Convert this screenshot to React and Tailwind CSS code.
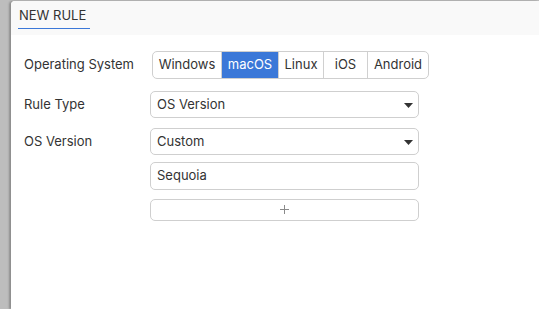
export default function App() {
  const font = { fontFamily: 'Inter, "Noto Sans", sans-serif' };
  const segs = [
    { t: "Windows", w: "w-[68px]" },
    { t: "macOS", w: "w-[57px]", active: true },
    { t: "Linux", w: "w-[45px]" },
    { t: "iOS", w: "w-[44px]" },
    { t: "Android", w: "w-[61px]" },
  ];
  const Caret = () => (
    <svg width="9" height="5" viewBox="0 0 9 5" className="mr-[5px] mt-[2px]">
      <path d="M0 0h9L4.5 5z" fill="#333" />
    </svg>
  );
  return (
    <div
      className="w-[539px] h-[309px] bg-[#bdbdbd] flex pl-[11px] pt-[1px] overflow-hidden text-[#333]"
      style={font}
    >
      <div className="flex-1 flex flex-col bg-white rounded-tl-[4px] shadow-[-2px_0_2px_rgba(0,0,0,0.25)]">
        <div className="h-[34px] bg-[#f9f9f9] rounded-tl-[4px] px-[7px] flex">
          <div className="w-[72px] h-[28px] border-b border-[#3b78d8] pl-[1px] pt-[6px] text-[13px] leading-[16px] text-[#333]">
            NEW RULE
          </div>
        </div>
        <div className="pt-[16px] pl-[13px] flex flex-col text-[13px]">
          <div className="flex items-center h-[28px]">
            <div className="w-[126px]">Operating System</div>
            <div className="ml-[2px] flex h-[28px] border border-[#cfcfcf] rounded-[5px] overflow-hidden">
              {segs.map((s, i) => (
                <div
                  key={s.t}
                  className={`${s.w} flex items-center justify-center ${
                    i > 0 ? "border-l border-[#d0d0d0]" : ""
                  } ${s.active ? "bg-[#3b78d8] text-white" : "text-[#333]"}`}
                >
                  {s.t}
                </div>
              ))}
            </div>
          </div>
          <div className="flex items-center h-[27px] mt-[12px]">
            <div className="w-[126px]">Rule Type</div>
            <div className="w-[269px] h-[27px] border border-[#cfcfcf] rounded-[5px] flex items-center justify-between pl-[6px]">
              <span>OS Version</span>
              <Caret />
            </div>
          </div>
          <div className="flex items-center h-[27px] mt-[10px]">
            <div className="w-[126px]">OS Version</div>
            <div className="w-[269px] h-[27px] border border-[#cfcfcf] rounded-[5px] flex items-center justify-between pl-[6px]">
              <span>Custom</span>
              <Caret />
            </div>
          </div>
          <div className="flex items-center h-[28px] mt-[7px] pl-[126px]">
            <div className="w-[269px] h-[28px] border border-[#cfcfcf] rounded-[5px] flex items-center pl-[6px]">
              Sequoia
            </div>
          </div>
          <div className="flex items-center h-[22px] mt-[9px] pl-[126px]">
            <div className="w-[269px] h-[22px] border border-[#cfcfcf] rounded-[5px] flex items-center justify-center text-[#888]">
              <svg width="9" height="9" viewBox="0 0 9 9" className="-mt-[1px]">
                <path d="M4.5 0v9M0 4.5h9" stroke="#8a8a8a" strokeWidth="1" />
              </svg>
            </div>
          </div>
        </div>
      </div>
    </div>
  );
}
